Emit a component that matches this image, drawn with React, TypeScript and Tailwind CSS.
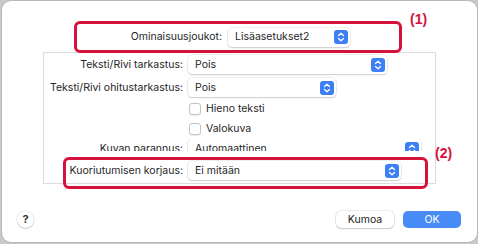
import React from "react";

const font = { fontFamily: "Inter, 'Liberation Sans', sans-serif" };

function Arrows() {
  return (
    <div className="w-[14px] h-[14px] rounded-[3px] bg-[#3d7ff5] flex items-center justify-center shrink-0">
      <svg width="8" height="10" viewBox="0 0 8 10" fill="none" stroke="white" strokeWidth="1.3" strokeLinecap="round" strokeLinejoin="round">
        <path d="M1.5 3.5 L4 1.2 L6.5 3.5" />
        <path d="M1.5 6.5 L4 8.8 L6.5 6.5" />
      </svg>
    </div>
  );
}

function Select({ text, w }: { text: string; w: string }) {
  return (
    <div className={`${w} h-[19px] shrink-0 bg-white rounded-[4px] shadow-[0_0_0_0.5px_rgba(0,0,0,0.12),0_1px_1.5px_rgba(0,0,0,0.15)] flex items-center justify-between pl-[7px] pr-[2px]`}>
      <span className="text-[10.5px] text-[#1f1f1f]">{text}</span>
      <Arrows />
    </div>
  );
}

function Row({ label, children }: { label: string; children: React.ReactNode }) {
  return (
    <div className="flex items-center h-[19px] gap-[5px]">
      <div className="w-[139px] text-right text-[10.5px] text-[#262626] whitespace-nowrap">{label}</div>
      {children}
    </div>
  );
}

function Check({ label }: { label: string }) {
  return (
    <div className="flex items-center h-[19px] pl-[145px] gap-[5px]">
      <div className="w-[12px] h-[12px] rounded-[3px] bg-white border border-[#c4c4c4] shadow-[0_0.5px_1px_rgba(0,0,0,0.08)]" />
      <span className="text-[10.5px] text-[#1f1f1f]">{label}</span>
    </div>
  );
}

export default function App() {
  return (
    <div className="relative w-[478px] h-[244px] bg-[#c9c9c9] overflow-hidden" style={font}>
      <div className="ml-[2px] mt-[1px] w-[475px] h-[241px] bg-white rounded-[9px] flex flex-col shadow-[0_0_0_1px_rgba(0,0,0,0.08)]">
        <div className="flex items-center h-[18px] mt-[27px] gap-[6px]">
          <div className="w-[220px] text-right text-[10.5px] text-[#262626]">Ominaisuusjoukot:</div>
          <Select text="Lisäasetukset2" w="w-[122px]" />
        </div>
        <div className="ml-[41px] mt-[6px] w-[393px] h-[132px] border border-[#dcdcdc] flex flex-col pt-[2px]">
          <Row label="Teksti/Rivi tarkastus:">
            <Select text="Pois" w="w-[199px]" />
          </Row>
          <div className="mt-[4px]">
            <Row label="Teksti/Rivi ohitustarkastus:">
              <Select text="Pois" w="w-[148px]" />
            </Row>
          </div>
          <div className="mt-[2px]">
            <Check label="Hieno teksti" />
          </div>
          <div className="mt-[1px]">
            <Check label="Valokuva" />
          </div>
          <div className="mt-[1px] h-[12px] overflow-hidden">
            <Row label="Kuvan parannus:">
              <Select text="Automaattinen" w="w-[233px]" />
            </Row>
          </div>
          <div className="mt-[10px]">
            <Row label="Kuoriutumisen korjaus:">
              <Select text="Ei mitään" w="w-[213px]" />
            </Row>
          </div>
        </div>
        <div className="flex-1" />
        <div className="flex items-center justify-between pl-[15px] pr-[16px] pb-[14px]">
          <div className="w-[17px] h-[17px] rounded-full bg-white shadow-[0_0_0_0.5px_rgba(0,0,0,0.15),0_1px_1.5px_rgba(0,0,0,0.15)] flex items-center justify-center text-[11px] font-bold text-[#333]">?</div>
          <div className="flex gap-[9px]">
            <div className="w-[58px] h-[17px] rounded-[5px] bg-white shadow-[0_0_0_0.5px_rgba(0,0,0,0.15),0_1px_1.5px_rgba(0,0,0,0.15)] flex items-center justify-center text-[10.5px] text-[#222]">Kumoa</div>
            <div className="w-[58px] h-[17px] rounded-[5px] bg-[#4a8cf7] flex items-center justify-center text-[10.5px] text-white">OK</div>
          </div>
        </div>
      </div>

      <div className="absolute left-[74px] top-[21px] w-[328px] h-[32px] border-[3px] border-[#d6123c] rounded-[6px]" />
      <div className="absolute left-[410px] top-[9px] text-[14px] font-bold text-[#d6123c]" style={{ fontFamily: "'Liberation Sans', sans-serif" }}>(1)</div>
      <div className="absolute left-[435px] top-[143px] w-[365px]" />
      <div className="absolute left-[63px] top-[157px] w-[365px] h-[32px] border-[3px] border-[#d6123c] rounded-[6px]" />
      <div className="absolute left-[435px] top-[143px] text-[14px] font-bold text-[#d6123c]" style={{ fontFamily: "'Liberation Sans', sans-serif" }}>(2)</div>
    </div>
  );
}
